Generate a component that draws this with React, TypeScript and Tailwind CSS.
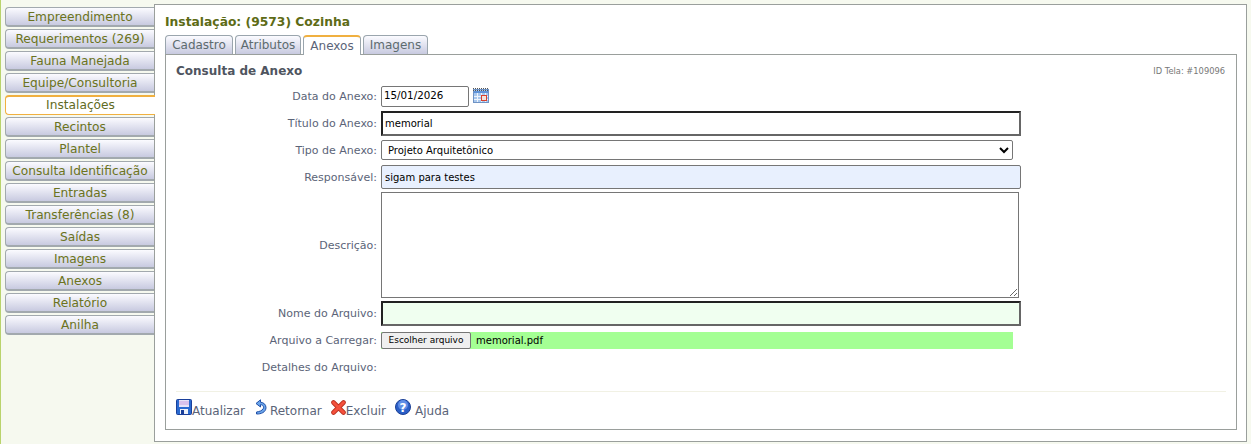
import React from "react";

const MENU = [
  "Empreendimento",
  "Requerimentos (269)",
  "Fauna Manejada",
  "Equipe/Consultoria",
  "Instalações",
  "Recintos",
  "Plantel",
  "Consulta Identificação",
  "Entradas",
  "Transferências (8)",
  "Saídas",
  "Imagens",
  "Anexos",
  "Relatório",
  "Anilha",
];

const TABS = [
  { label: "Cadastro", width: "w-[68px]" },
  { label: "Atributos", width: "w-[66px]" },
  { label: "Anexos", width: "w-[58px]", active: true },
  { label: "Imagens", width: "w-[65px]" },
];

function Label({ children, className = "" }: { children: React.ReactNode; className?: string }) {
  return (
    <div className={`w-[205px] shrink-0 self-center pr-[4px] pt-[2px] text-right text-[11px] text-[#5b6478] ${className}`}>
      {children}
    </div>
  );
}

function Calendar() {
  return (
    <svg width="16" height="15" viewBox="0 0 16 15" className="ml-[4px] -mt-px">
      <rect x="0.5" y="1.5" width="15" height="13" fill="#a9c8ee" stroke="#6f93c4" />
      <path d="M0 0.5h16M0 2.5h16" stroke="#555" strokeDasharray="1 1" />
      <rect x="1" y="3" width="14" height="2" fill="#5f93d8" />
      <path d="M1 8.5h14M1 11.5h14M4.5 5v9M8.5 5v9M12.5 5v9" stroke="#eef4fb" strokeWidth="1" />
      <rect x="8.5" y="7.5" width="5" height="5" fill="#f3e4dc" stroke="#d8402c" />
    </svg>
  );
}

function SaveIcon() {
  return (
    <svg width="16" height="16" viewBox="0 0 16 16">
      <rect x="0.5" y="0.5" width="15" height="15" rx="1" fill="#2a6ad0" stroke="#1a3f9a" />
      <rect x="3" y="1" width="10" height="7" fill="#e8e4f8" />
      <path d="M3 3h10M3 5h10" stroke="#c9a0e0" />
      <rect x="4" y="10" width="8" height="5" fill="#eef2fb" />
      <rect x="5" y="11" width="3" height="4" fill="#1a3f9a" />
    </svg>
  );
}

function ReturnIcon() {
  return (
    <svg width="12" height="16" viewBox="0 0 12 16">
      <path
        d="M5.5 0.8 L1 4.5 L5.5 8 L5.5 5.6 C8.5 5.8 9.2 8.5 8 10 C7 11.6 4.5 12.6 1.5 13 L1.5 15 C6 15.2 11 13.2 11 8.6 C11 5.5 8.5 3.4 5.5 3.2 Z"
        fill="#6aa4ea"
        stroke="#1f4fa8"
        strokeWidth="1"
      />
    </svg>
  );
}

function DeleteIcon() {
  return (
    <svg width="15" height="15" viewBox="0 0 15 15" className="mt-[1px]">
      <path d="M2.5 2.5 L12.5 12.5 M12.5 2.5 L2.5 12.5" stroke="#b8301f" strokeWidth="4.6" strokeLinecap="round" />
      <path d="M2.5 2.5 L12.5 12.5 M12.5 2.5 L2.5 12.5" stroke="#f4503c" strokeWidth="3" strokeLinecap="round" />
    </svg>
  );
}

function HelpIcon() {
  return (
    <svg width="16" height="16" viewBox="0 0 16 16">
      <circle cx="8" cy="8" r="7.5" fill="#2b5fc7" stroke="#1b3f94" />
      <circle cx="8" cy="6" r="5" fill="#5f8ee6" />
      <text x="8" y="12.5" textAnchor="middle" fontSize="12" fontWeight="700" fill="#fff" fontFamily="'DejaVu Sans', sans-serif">
        ?
      </text>
    </svg>
  );
}

export default function App() {
  return (
    <div className="flex h-[444px] w-[1251px] overflow-hidden border-l border-[#b9d36c] bg-[#f6f9ef] font-['DejaVu_Sans','Verdana',sans-serif]">
      {/* Menu lateral */}
      <div className="flex w-[153px] shrink-0 flex-col gap-[2px] pl-[4px] pt-[7px]">
        {MENU.map((item) =>
          item === "Instalações" ? (
            <div
              key={item}
              className="z-10 -mr-px flex h-[20px] items-center justify-center rounded-l-[4px] border border-r-0 border-t-2 border-[#f0b040] bg-white text-[12.2px] text-[#5f6b23]"
            >
              {item}
            </div>
          ) : (
            <div
              key={item}
              className="flex h-[20px] items-center justify-center rounded-l-[4px] border border-r-0 border-[#a2a9ae] border-b-2 bg-gradient-to-b from-[#fbfbff] to-[#c8cae0] pt-[1px] text-[12.2px] text-[#6b7320]"
            >
              {item}
            </div>
          ),
        )}
      </div>

      {/* Painel principal */}
      <div className="mb-[2px] mr-[4px] mt-[4px] flex flex-1 flex-col border border-[#9a9f9c] bg-white pl-[10px] pr-[9px]">
        <div className="pt-[9px] text-[12.3px] font-bold leading-[16px] text-[#5d6b16]">Instalação: (9573) Cozinha</div>

        <div className="mt-[5px] flex gap-[2px]">
          {TABS.map((tab) =>
            tab.active ? (
              <div
                key={tab.label}
                className={`${tab.width} z-10 -mb-px flex h-[20px] items-center justify-center rounded-t-[4px] border border-b-0 border-t-2 border-[#9aa5ad] border-t-[#f0b040] bg-white text-[12px] text-[#5b6478]`}
              >
                {tab.label}
              </div>
            ) : (
              <div
                key={tab.label}
                className={`${tab.width} flex h-[19px] items-center justify-center self-end rounded-t-[4px] border border-b-0 border-[#9aa5ad] bg-gradient-to-b from-[#fbfbff] to-[#c8cae0] text-[12px] text-[#5d6b6f]`}
              >
                {tab.label}
              </div>
            ),
          )}
        </div>

        <div className="flex h-[376px] flex-col border border-[#9a9f9c] pl-[10px] pr-[10px]">
          <div className="flex items-start justify-between pt-[8px]">
            <div className="text-[12px] font-bold leading-[16px] text-[#4f5560]">Consulta de Anexo</div>
            <div className="pr-[1px] pt-[2px] text-[8.3px] leading-[12px] text-[#777]">ID Tela: #109096</div>
          </div>

          <div className="mt-[6px] flex h-[22px] items-center">
            <Label>Data do Anexo:</Label>
            <div className="flex h-[21px] w-[88px] items-center rounded-[2px] border border-[#767676] pl-[2px] text-[10.3px] text-black">
              15/01/2026
            </div>
            <Calendar />
          </div>

          <div className="mt-[4px] flex h-[25px] items-center">
            <Label>Título do Anexo:</Label>
            <div className="flex h-[25px] w-[640px] items-center border-2 border-t-[#222] border-l-[#222] border-r-[#666] border-b-[#666] pl-[2px] text-[10px] text-black">
              memorial
            </div>
          </div>

          <div className="mt-[4px] flex h-[21px] items-start">
            <Label>Tipo de Anexo:</Label>
            <select
              defaultValue="p"
              className="h-[20px] w-[632px] rounded-[2px] border border-[#767676] bg-white pl-[2px] text-[10px] text-black"
            >
              <option value="p">Projeto Arquitetônico</option>
            </select>
          </div>

          <div className="mt-[4px] flex h-[24px] items-center">
            <Label>Responsável:</Label>
            <div className="flex h-[24px] w-[640px] items-center rounded-[2px] border border-[#767676] bg-[#e8f0fe] pl-[3px] text-[10px] text-black">
              sigam para testes
            </div>
          </div>

          <div className="mt-[3px] flex h-[106px] items-center">
            <Label>Descrição:</Label>
            <textarea readOnly className="h-[106px] w-[638px] border border-[#767676] bg-white" />
          </div>

          <div className="mt-[3px] flex h-[25px] items-center">
            <Label>Nome do Arquivo:</Label>
            <div className="h-[25px] w-[640px] border-2 border-t-[#222] border-l-[#222] border-r-[#666] border-b-[#666] bg-[#f0fff0]" />
          </div>

          <div className="mt-[5px] flex h-[18px] items-center">
            <Label>Arquivo a Carregar:</Label>
            <div className="flex h-[17px] w-[632px] items-center bg-[#a4ff94] text-[10px] text-black">
              <div className="flex h-[17px] w-[90px] shrink-0 items-center justify-center rounded-[2px] border border-[#767676] bg-[#efefef] pt-[1px] text-[9px]">
                Escolher arquivo
              </div>
              <span className="pl-[5px]">memorial.pdf</span>
            </div>
          </div>

          <div className="mt-[9px] flex h-[18px] items-center">
            <Label>Detalhes do Arquivo:</Label>
          </div>

          <div className="mt-[15px] flex items-start border-t border-[#f1f1e4] pt-[7px] text-[12px] leading-[15px] text-[#5b6478]">
            <span className="flex items-start">
              <SaveIcon />
              <span className="mt-[5px]">Atualizar</span>
            </span>
            <span className="ml-[10px] flex items-start">
              <ReturnIcon />
              <span className="ml-[3px] mt-[5px]">Retornar</span>
            </span>
            <span className="ml-[9px] flex items-start">
              <DeleteIcon />
              <span className="mt-[5px]">Excluir</span>
            </span>
            <span className="ml-[9px] flex items-start">
              <HelpIcon />
              <span className="ml-[4px] mt-[5px]">Ajuda</span>
            </span>
          </div>
        </div>
      </div>
    </div>
  );
}
